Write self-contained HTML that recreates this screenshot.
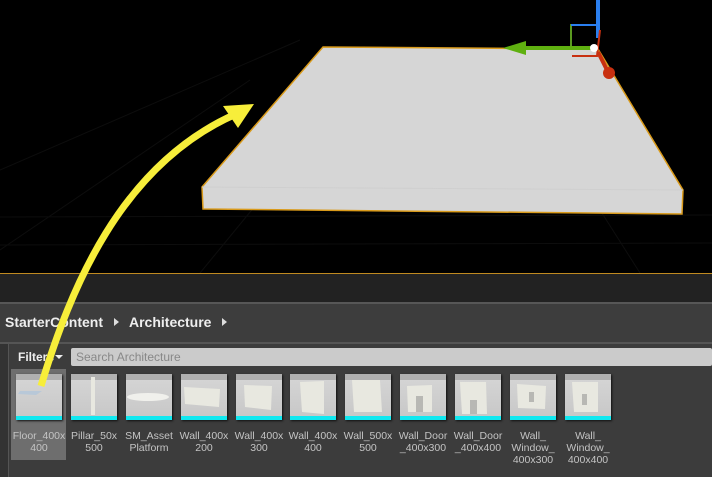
<!DOCTYPE html>
<html><head><style>
*{margin:0;padding:0;box-sizing:border-box}
body{width:712px;height:477px;overflow:hidden;background:#3c3c3c;font-family:"Liberation Sans",sans-serif;position:relative}
.abs{position:absolute}
.tile{position:absolute;top:374px;width:46px;height:46px;background:linear-gradient(#b0b0b0 0,#b0b0b0 6px,#d4d4d4 6px,#c8c8c8 42px);box-shadow:1px 1px 2px #111}
.tile .c{position:absolute;left:0;right:0;bottom:0;height:4px;background:#10e8f0}
.lbl{position:absolute;top:430px;width:56px;text-align:center;font-size:10.5px;line-height:12px;color:#c4c4c4}
</style></head><body>
<div class="abs" style="left:0;top:0;width:712px;height:273px;background:#000"></div>
<svg class="abs" style="left:0;top:0" width="712" height="273">
<g stroke="#0d0d0d" stroke-width="1">
<line x1="0" y1="217" x2="712" y2="215"/><line x1="0" y1="245" x2="712" y2="243"/>
<line x1="0" y1="170" x2="300" y2="40"/><line x1="0" y1="250" x2="250" y2="80"/>
<line x1="200" y1="273" x2="260" y2="200"/><line x1="640" y1="273" x2="600" y2="210"/>
</g>
<polygon points="323,47 598,49 683,190 682,214 203,209 202,187" fill="#d6d6d6" stroke="#d99a1a" stroke-width="1.5"/>
<line x1="202" y1="187" x2="683" y2="190" stroke="#cfcfcf"/>
<line x1="598" y1="0" x2="598" y2="38" stroke="#2a7ff0" stroke-width="4"/>
<polyline points="571,50 571,25 597,25" fill="none" stroke="#5a9a20" stroke-width="2"/>
<line x1="571" y1="25" x2="597" y2="25" stroke="#2a7ff0" stroke-width="2"/>
<line x1="520" y1="48" x2="592" y2="48" stroke="#5fb010" stroke-width="4"/>
<polygon points="503,48 526,41 526,55" fill="#5fb010"/>
<polyline points="572,56 597,56 600,30" fill="none" stroke="#c83010" stroke-width="2"/>
<line x1="598" y1="52" x2="608" y2="72" stroke="#c83010" stroke-width="4"/>
<circle cx="609" cy="73" r="6" fill="#c83010"/>
<circle cx="594" cy="48" r="4" fill="#fff"/>
</svg>
<div class="abs" style="left:0;top:273px;width:712px;height:1px;background:#c08a20"></div>
<div class="abs" style="left:0;top:274px;width:712px;height:28px;background:#222"></div>
<div class="abs" style="left:0;top:302px;width:712px;height:2px;background:#575757"></div>
<div class="abs" style="left:0;top:304px;width:712px;height:38px;background:#3d3d3d"></div>
<div class="abs" style="left:5px;top:314px;font-size:14px;font-weight:bold;color:#eee">StarterContent</div>
<div class="abs" style="left:114px;top:318px;width:0;height:0;border-left:5px solid #ddd;border-top:4px solid transparent;border-bottom:4px solid transparent"></div>
<div class="abs" style="left:129px;top:314px;font-size:14px;font-weight:bold;color:#eee">Architecture</div>
<div class="abs" style="left:222px;top:318px;width:0;height:0;border-left:5px solid #ddd;border-top:4px solid transparent;border-bottom:4px solid transparent"></div>
<div class="abs" style="left:0;top:342px;width:712px;height:2px;background:#555"></div>
<div class="abs" style="left:0;top:344px;width:8px;height:133px;background:#333"></div>
<div class="abs" style="left:8px;top:344px;width:1px;height:133px;background:#555"></div>
<div class="abs" style="left:18px;top:350px;font-size:12px;font-weight:bold;color:#eee">Filters</div>
<div class="abs" style="left:55px;top:355px;width:0;height:0;border-top:4px solid #eee;border-left:4px solid transparent;border-right:4px solid transparent"></div>
<div class="abs" style="left:71px;top:348px;width:641px;height:18px;background:#cbcbcb;border-radius:2px"></div>
<div class="abs" style="left:76px;top:350px;font-size:12px;color:#888">Search Architecture</div>
<div class="abs" style="left:11px;top:369px;width:55px;height:91px;background:#6e6e6e"></div>
<div class="tile" style="left:16px"><div class="c"></div></div>
<div class="tile" style="left:71px"><div class="c"></div></div>
<div class="tile" style="left:126px"><div class="c"></div></div>
<div class="tile" style="left:181px"><div class="c"></div></div>
<div class="tile" style="left:236px"><div class="c"></div></div>
<div class="tile" style="left:290px"><div class="c"></div></div>
<div class="tile" style="left:345px"><div class="c"></div></div>
<div class="tile" style="left:400px"><div class="c"></div></div>
<div class="tile" style="left:455px"><div class="c"></div></div>
<div class="tile" style="left:510px"><div class="c"></div></div>
<div class="tile" style="left:565px"><div class="c"></div></div>
<svg class="abs" style="left:0;top:374px" width="712" height="46">
<polygon points="20,17 42,17 36,21 18,20" fill="#b8c8d8"/>
<rect x="91" y="3" width="4" height="38" fill="#e8e8e0"/>
<ellipse cx="148" cy="23" rx="21" ry="4" fill="#f0f0ec"/>
<polygon points="184,13 220,15 219,33 185,30" fill="#e8e8e0"/>
<polygon points="244,11 272,12 271,36 245,33" fill="#e8e8e0"/>
<polygon points="300,8 324,7 324,40 302,38" fill="#e8e8e0"/>
<polygon points="352,6 380,6 382,38 354,38" fill="#e8e8e0"/>
<polygon points="407,12 432,11 432,38 408,38" fill="#e8e8e0"/><rect x="416" y="22" width="7" height="16" fill="#b8b8b4"/>
<polygon points="460,8 486,8 487,40 462,40" fill="#e8e8e0"/><rect x="470" y="26" width="7" height="14" fill="#b8b8b4"/>
<polygon points="517,10 546,12 545,35 518,34" fill="#e8e8e0"/><rect x="529" y="18" width="5" height="10" fill="#b8b8b4"/>
<polygon points="572,8 598,8 598,38 574,38" fill="#e8e8e0"/><rect x="582" y="20" width="5" height="11" fill="#b8b8b4"/>
</svg>
<div class="lbl" style="left:11px">Floor_400x<br>400</div>
<div class="lbl" style="left:66px">Pillar_50x<br>500</div>
<div class="lbl" style="left:121px">SM_Asset<br>Platform</div>
<div class="lbl" style="left:176px">Wall_400x<br>200</div>
<div class="lbl" style="left:231px">Wall_400x<br>300</div>
<div class="lbl" style="left:285px">Wall_400x<br>400</div>
<div class="lbl" style="left:340px">Wall_500x<br>500</div>
<div class="lbl" style="left:395px">Wall_Door<br>_400x300</div>
<div class="lbl" style="left:450px">Wall_Door<br>_400x400</div>
<div class="lbl" style="left:505px">Wall_<br>Window_<br>400x300</div>
<div class="lbl" style="left:560px">Wall_<br>Window_<br>400x400</div>
<svg class="abs" style="left:0;top:0" width="712" height="477">
<path d="M41,386 C70,290 120,165 236,114" fill="none" stroke="#f7ee3a" stroke-width="7"/>
<polygon points="254,104 223,106 238,128" fill="#f7ee3a"/>
</svg>
</body></html>
